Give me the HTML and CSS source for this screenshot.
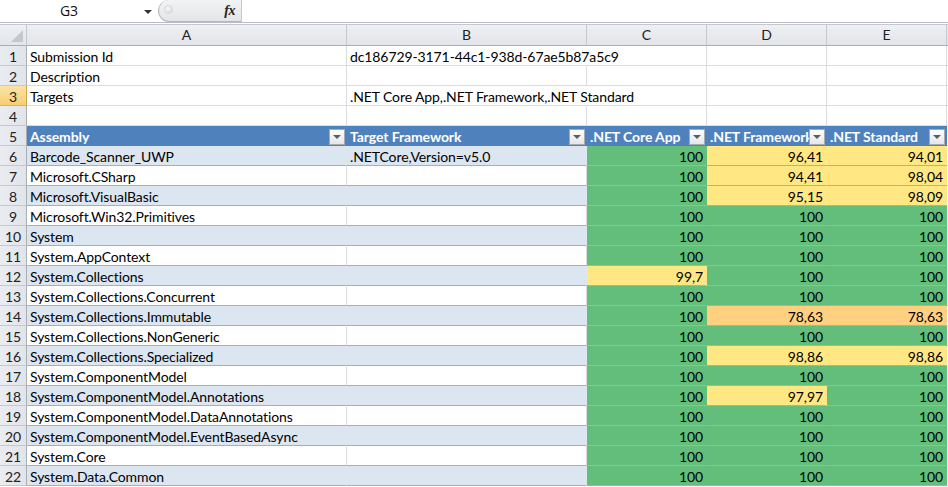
FILE: index.html
```html
<!DOCTYPE html>
<html>
<head>
<meta charset="utf-8">
<link rel="stylesheet" href="styles.css">
</head>
<body>
<div class="app">
  <div class="fbar">
    <div class="namebox"><span class="name">G3</span><span class="nb-arrow"></span></div>
    <div class="capsule"><span class="dot"></span><span class="fx">fx</span></div>
    <div class="finput"></div>
  </div>
  <div class="gap"></div>
  <div class="sheet" id="sheet">
    <div class="ch corner"><span class="tri"></span></div>
    <div class="ch">A</div>
    <div class="ch">B</div>
    <div class="ch">C</div>
    <div class="ch">D</div>
    <div class="ch">E</div>
    <div class="ch rest"></div>

    <div class="rh">1</div>
    <div class="c">Submission Id</div>
    <div class="c over">dc186729-3171-44c1-938d-67ae5b87a5c9</div>
    <div class="c nob"></div>
    <div class="c"></div>
    <div class="c"></div>
    <div class="c rest"></div>

    <div class="rh">2</div>
    <div class="c">Description</div>
    <div class="c"></div>
    <div class="c"></div>
    <div class="c"></div>
    <div class="c"></div>
    <div class="c rest"></div>

    <div class="rh sel">3</div>
    <div class="c">Targets</div>
    <div class="c over">.NET Core App,.NET Framework,.NET Standard</div>
    <div class="c nob"></div>
    <div class="c"></div>
    <div class="c"></div>
    <div class="c rest"></div>

    <div class="rh">4</div>
    <div class="c"></div>
    <div class="c"></div>
    <div class="c"></div>
    <div class="c"></div>
    <div class="c"></div>
    <div class="c rest"></div>

    <div class="rh">5</div>
    <div class="c th">Assembly<span class="flt"></span></div>
    <div class="c th">Target Framework<span class="flt"></span></div>
    <div class="c th">.NET Core App<span class="flt"></span></div>
    <div class="c th">.NET Framework<span class="flt"></span></div>
    <div class="c th">.NET Standard<span class="flt"></span></div>
    <div class="c rest"></div>
  </div>
</div>
<script src="app.js"></script>
</body>
</html>
```

FILE: app.js
```js
const rows = [
  ["Barcode_Scanner_UWP", ".NETCore,Version=v5.0", "100", "96,41", "94,01"],
  ["Microsoft.CSharp", "", "100", "94,41", "98,04"],
  ["Microsoft.VisualBasic", "", "100", "95,15", "98,09"],
  ["Microsoft.Win32.Primitives", "", "100", "100", "100"],
  ["System", "", "100", "100", "100"],
  ["System.AppContext", "", "100", "100", "100"],
  ["System.Collections", "", "99,7", "100", "100"],
  ["System.Collections.Concurrent", "", "100", "100", "100"],
  ["System.Collections.Immutable", "", "100", "78,63", "78,63"],
  ["System.Collections.NonGeneric", "", "100", "100", "100"],
  ["System.Collections.Specialized", "", "100", "98,86", "98,86"],
  ["System.ComponentModel", "", "100", "100", "100"],
  ["System.ComponentModel.Annotations", "", "100", "97,97", "100"],
  ["System.ComponentModel.DataAnnotations", "", "100", "100", "100"],
  ["System.ComponentModel.EventBasedAsync", "", "100", "100", "100"],
  ["System.Core", "", "100", "100", "100"],
  ["System.Data.Common", "", "100", "100", "100"]
];
const sheet = document.getElementById("sheet");
function el(cls, text) {
  const d = document.createElement("div");
  d.className = cls;
  if (text) d.textContent = text;
  sheet.appendChild(d);
  return d;
}
function scale(v) {
  const n = parseFloat(v.replace(",", "."));
  if (n >= 100) return "g";
  if (n >= 90) return "y";
  return "o";
}
rows.forEach((r, i) => {
  const num = i + 6;
  const band = num % 2 === 0 ? " band" : "";
  el("rh", String(num));
  el("c t" + band, r[0]);
  el("c t" + band, r[1]);
  el("c t num " + scale(r[2]), r[2]);
  el("c t num " + scale(r[3]), r[3]);
  el("c t num " + scale(r[4]), r[4]);
  el("c rest", "");
});
```

FILE: styles.css
```css
* { box-sizing: border-box; }
html, body { margin: 0; padding: 0; background: #fff; overflow: hidden; }
body { width: 948px; height: 487px; font-family: Lato, "Liberation Sans", sans-serif; }

.fbar {
  display: flex;
  height: 23px;
  border-bottom: 1px solid #b9bdc3;
  background: #fff;
}
.namebox {
  width: 158px;
  position: relative;
  display: flex;
  align-items: center;
  justify-content: center;
  font-family: "Open Sans", "DejaVu Sans", sans-serif;
  font-size: 14px;
  color: #111;
}
.name { margin-right: 20px; margin-top: -1px; }
.nb-arrow {
  position: absolute;
  right: 6px;
  top: 10px;
  width: 0; height: 0;
  border-left: 4px solid transparent;
  border-right: 4px solid transparent;
  border-top: 4px solid #333;
}
.capsule {
  width: 84px;
  height: 22px;
  border: 1px solid #b4b8be;
  border-right: 1px solid #c5c8cc;
  border-top: none;
  border-radius: 12px 0 0 12px;
  background: linear-gradient(#f2f3f5, #e3e5e8);
  display: flex;
  align-items: center;
  justify-content: space-between;
  padding: 0 6px 0 5px;
}
.dot {
  width: 9px; height: 9px;
  border-radius: 50%;
  background: radial-gradient(circle at 40% 35%, #fafafa, #cfd2d6);
  border: 1px solid #d7dade;
  margin-top: -3px;
}
.fx {
  font-family: "Liberation Serif", serif;
  font-style: italic;
  font-weight: bold;
  font-size: 14px;
  color: #222;
  letter-spacing: -0.5px;
}
.finput { flex: 1; }
.gap { height: 1px; background: #fff; }

.sheet {
  display: grid;
  grid-template-columns: 27px 320px 240px 120px 120px 120px 1fr;
  grid-template-rows: 22px;
  grid-auto-rows: 20px;
  font-size: 14px;
  letter-spacing: -0.1px;
  color: #000;
}
.ch {
  background: linear-gradient(#eef0f3, #e2e5e9);
  border-right: 1px solid #c5c9cf;
  border-bottom: 1px solid #a9aeb5;
  border-top: 1px solid #c5c9cf;
  text-align: center;
  font-size: 14px;
  line-height: 20px;
  color: #222;
}
.ch.rest { border-right: none; }
.corner { position: relative; }
.tri {
  position: absolute;
  right: 3px;
  bottom: 3px;
  width: 0; height: 0;
  border-left: 12px solid transparent;
  border-bottom: 12px solid #c4c8cd;
}
.rh {
  background: linear-gradient(90deg, #e9ecf0, #e1e4e8);
  border-right: 1px solid #a9aeb5;
  border-bottom: 1px solid #c5c9cf;
  text-align: center;
  line-height: 21px;
  font-size: 14px;
  color: #222;
}
.rh.sel {
  background: linear-gradient(#fbe3a6, #f7cf70);
  border-bottom: 1px solid #e0b34f;
  border-right: 1px solid #d2a440;
}
.c {
  border-right: 1px solid #dadcdf;
  border-bottom: 1px solid #dadcdf;
  padding: 0 3px;
  line-height: 21px;
  white-space: nowrap;
  position: relative;
  overflow: visible;
}
.c.over { overflow: visible; z-index: 1; border-right-color: transparent; }
.c.rest { border-right: none; }
.c.th {
  background: #4f81bd;
  color: #fff;
  font-weight: bold;
  border-right: none;
  border-bottom: none;
  border-top: 1px solid #4f81bd;
  line-height: 19px;
  overflow: hidden;
}
.c.t { border-bottom: 1px solid #95b3d7; }
.c.band { background: #dce6f1; border-right-color: #dce6f1; }
.c.num { text-align: right; }
.c.g { background: #63be7b; border-right-color: #63be7b; }
.c.y { background: #ffe884; border-right-color: #ffe884; }
.c.o { background: #fed07f; border-right-color: #fed07f; }
.flt {
  position: absolute;
  right: 2px;
  top: 2px;
  width: 16px;
  height: 16px;
  background: linear-gradient(#ffffff, #e4e6e9);
  border: 1px solid #a7acb3;
}
.flt::after {
  content: "";
  position: absolute;
  left: 3px;
  top: 5px;
  width: 0; height: 0;
  border-left: 4px solid transparent;
  border-right: 4px solid transparent;
  border-top: 4px solid #5a5f66;
}
```
